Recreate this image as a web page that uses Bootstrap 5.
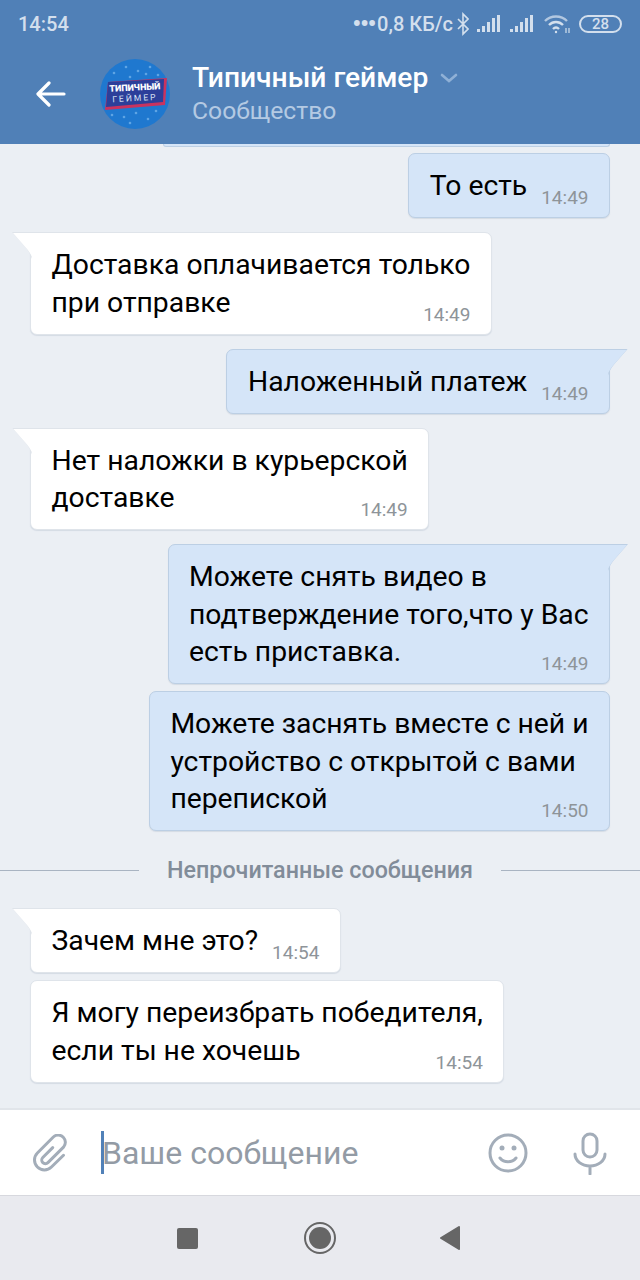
<!DOCTYPE html>
<html lang="ru">
<head>
    <meta charset="UTF-8">
    <meta name="viewport" content="width=device-width, initial-scale=1.0">
    <title>Типичный геймер</title>
    <link href="https://cdn.jsdelivr.net/npm/bootstrap@5.3.0/dist/css/bootstrap.min.css" rel="stylesheet">
    <style>
        body { margin: 0; width: 640px; height: 1280px; overflow: hidden; font-family: Roboto, "Liberation Sans", sans-serif; background: #ebeff4; }
        .app-screen { height: 1280px; }

        /* шапка */
        .top-bar { height: 144px; background: #5080b7; flex: none; position: relative; z-index: 2; }
        .status-row { height: 46px; padding: 1px 18px 0 18px; color: #d3dfed; font-size: 20px; font-weight: 500; }
        .speed-dots { font-size: 26px; line-height: 20px; letter-spacing: -1.500px; margin-right: 2px; }
        .battery-box { width: 43px; height: 18px; border: 2px solid #d3dfed; border-radius: 9px; font-size: 15px; line-height: 14px; text-align: center; }
        .head-row { height: 98px; padding: 0 0 2px 36px; }
        .back-btn { width: 30px; margin-right: 34px; }
        .group-pic { width: 70px; height: 70px; margin-right: 22px; flex: none; }
        .group-name { font-size: 28.2px; font-weight: 500; line-height: 34px; color: #fff; }
        .name-arrow { margin-left: 12px; }
        .group-type { font-size: 24.7px; line-height: 32px; color: #b4cae3; }

        /* сообщения */
        .chat-area { flex: 1 1 auto; overflow: hidden; padding: 0 30px; }
        .prev-sliver { height: 3px; margin-left: 133px; background: #d5e5f8; border: 1px solid #bccfe4; border-top: 0; border-radius: 0 0 5px 5px; }
        .bubble { position: relative; display: flow-root; width: fit-content; padding: 13px 20.5px 12.5px 20.5px; font-size: 28.3px; line-height: 37.5px; color: #000; border: 1px solid; border-radius: 7px; box-shadow: 0 1px 1px rgba(90, 110, 140, .15); white-space: nowrap; }
        .bubble-in { background: #fff; border-color: #dfe4ea; }
        .bubble-out { background: #d5e5f8; border-color: #bccfe4; align-self: flex-end; }
        .gap-new { margin-top: 14px; }
        .gap-same { margin-top: 7px; }
        .first-out { margin-top: 6px; }
        .msg-time { float: right; margin: 22px 0 -6px 14px; font-size: 19px; line-height: 18px; color: #8e9499; }
        .tail-in { border-top-left-radius: 0; }
        .tail-in::before, .tail-in::after { content: ""; position: absolute; top: -1px; width: 20px; height: 27px; clip-path: path('M0 0H20V27C19 23 17 20 14 16Z'); }
        .tail-in::before { left: -19px; background: #dfe4ea; }
        .tail-in::after { left: -18px; top: 0; background: #fff; }
        .tail-out { border-top-right-radius: 0; }
        .tail-out::before, .tail-out::after { content: ""; position: absolute; top: -1px; width: 20px; height: 27px; clip-path: path('M0 0H20L6 16C3 20 1 23 0 27Z'); }
        .tail-out::before { right: -19px; background: #bccfe4; }
        .tail-out::after { right: -18px; top: 0; background: #d5e5f8; }
        .unread-row { margin: 27px -30px 26px; height: 24px; font-size: 23.3px; font-weight: 500; color: #818c99; gap: 28px; }
        .unread-line { flex: 1 1 0; height: 1px; background: #a9b4c2; }

        /* поле ввода */
        .composer { height: 88px; flex: none; background: #fff; border-top: 2px solid #e1e5ea; border-bottom: 1px solid #d7d8de; padding: 0 33px 0 32px; }
        .text-caret { width: 3px; height: 43px; background: #5181b8; margin-left: 33px; }
        .hint-text { font-size: 32px; line-height: 40px; color: #939ba5; margin: 1px 0 0 -2px; }
        .emoji-icon { margin-right: 45px; }

        /* системная панель */
        .sys-nav { height: 84px; flex: none; background: #e9eaef; padding-right: 2px; }
        .sys-nav svg { display: block; }
        .home-key { margin: 0 103px 0 106px; }
    </style>
</head>
<body>
    <div class="app-screen d-flex flex-column">
        <!-- Шапка со статус-баром -->
        <div class="top-bar">
            <div class="status-row d-flex align-items-center">
                <span>14:54</span>
                <span class="ms-auto speed-dots">•••</span>
                <span>0,8 КБ/с</span>
                <svg class="ms-1" width="12" height="24" viewBox="0 0 12 24" fill="none" stroke="#d3dfed" stroke-width="1.6"><path d="M1 7l10 10-5 5V2l5 5L1 17"/></svg>
                <svg class="ms-2" width="25" height="18" viewBox="0 0 25 18" fill="#d3dfed"><rect x="0" y="14" width="3" height="3"/><rect x="5" y="11" width="3" height="6"/><rect x="10" y="7" width="3" height="10"/><rect x="15" y="3" width="3" height="14"/><rect x="20" y="0" width="3" height="17"/></svg>
                <svg class="ms-2" width="25" height="18" viewBox="0 0 25 18" fill="#d3dfed"><rect x="0" y="14" width="3" height="3"/><rect x="5" y="11" width="3" height="6"/><rect x="10" y="7" width="3" height="10"/><rect x="15" y="3" width="3" height="14"/><rect x="20" y="0" width="3" height="17"/></svg>
                <svg class="ms-2" width="28" height="20" viewBox="0 0 28 20" fill="none" stroke="#d3dfed" stroke-width="2.4"><path d="M2 7c6-6 16-6 22 0" opacity=".75"/><path d="M6 11c4-4 10-4 14 0"/><path d="M10 15c2-2 4-2 6 0"/><circle cx="13" cy="18" r="1.2" fill="#d3dfed" stroke="none"/><path d="M23 14v5M26 14v5" stroke-width="1.2"/></svg>
                <div class="battery-box ms-2">28</div>
            </div>
            <div class="head-row d-flex align-items-center">
                <div class="back-btn">
                    <svg class="d-block" width="30" height="26" viewBox="0 0 30 26" fill="none" stroke="#fff" stroke-width="3.2" stroke-linecap="round" stroke-linejoin="round"><path d="M28 13H3M13 2L2 13l11 11"/></svg>
                </div>
                <svg class="group-pic" viewBox="0 0 70 70">
                    <circle cx="35" cy="35" r="35" fill="#1f78cf"/>
                    <g fill="#5ea4e4">
                        <circle cx="14" cy="14" r="1.3"/><circle cx="26" cy="8" r="1.3"/><circle cx="38" cy="12" r="1.3"/><circle cx="50" cy="8" r="1.3"/><circle cx="58" cy="16" r="1.3"/><circle cx="30" cy="18" r="1.3"/><circle cx="46" cy="15" r="1.3"/>
                        <circle cx="12" cy="56" r="1.3"/><circle cx="24" cy="58" r="1.3"/><circle cx="36" cy="54" r="1.3"/><circle cx="48" cy="60" r="1.3"/><circle cx="56" cy="52" r="1.3"/><circle cx="30" cy="64" r="1.3"/>
                    </g>
                    <path d="M8 23L67 19l-2 27L5 51z" fill="#c9335f"/>
                    <path d="M8 23L64 20l-1 23L6 48z" fill="#2c3f9a"/>
                    <text x="35" y="31.500" font-family="Roboto" font-weight="900" font-size="9" fill="#fff" text-anchor="middle" transform="rotate(-3 35 31)">ТИПИЧНЫЙ</text>
                    <text x="35" y="42" font-family="Roboto" font-size="8.500" letter-spacing="2" fill="#dbe5f5" text-anchor="middle" transform="rotate(-3 35 42)">ГЕЙМЕР</text>
                </svg>
                <div>
                    <div class="group-name d-flex align-items-center">Типичный геймер
                        <svg class="name-arrow" width="18" height="10" viewBox="0 0 18 10" fill="none" stroke="#8fb0d6" stroke-width="2.6" stroke-linecap="round"><path d="M2 2l7 6 7-6"/></svg>
                    </div>
                    <div class="group-type">Сообщество</div>
                </div>
            </div>
        </div>

        <!-- Лента сообщений -->
        <div class="chat-area d-flex flex-column">
            <div class="prev-sliver"></div>
            <div class="bubble bubble-out first-out">То есть<span class="msg-time">14:49</span></div>
            <div class="bubble bubble-in tail-in gap-new">Доставка оплачивается только<br>при отправке<span class="msg-time">14:49</span></div>
            <div class="bubble bubble-out tail-out gap-new">Наложенный платеж<span class="msg-time">14:49</span></div>
            <div class="bubble bubble-in tail-in gap-new">Нет наложки в курьерской<br>доставке<span class="msg-time">14:49</span></div>
            <div class="bubble bubble-out tail-out gap-new">Можете снять видео в<br>подтверждение того,что у Вас<br>есть приставка.<span class="msg-time">14:49</span></div>
            <div class="bubble bubble-out gap-same">Можете заснять вместе с ней и<br>устройство с открытой с вами<br>перепиской<span class="msg-time">14:50</span></div>
            <div class="unread-row d-flex align-items-center">
                <div class="unread-line"></div>
                <span>Непрочитанные сообщения</span>
                <div class="unread-line"></div>
            </div>
            <div class="bubble bubble-in tail-in">Зачем мне это?<span class="msg-time">14:54</span></div>
            <div class="bubble bubble-in gap-same">Я могу переизбрать победителя,<br>если ты не хочешь<span class="msg-time">14:54</span></div>
        </div>

        <!-- Поле ввода -->
        <div class="composer d-flex align-items-center">
            <svg width="36" height="38" viewBox="10 11 40 42" fill="none" stroke="#a3adb9" stroke-width="3.300" stroke-linecap="round" stroke-linejoin="round"><path d="M33 26L22 37a4 4 0 0 0 5.700 5.700L45 25.500a8 8 0 0 0-11.300-11.300L16 32a11 11 0 0 0 15.600 15.600L45 34.500"/></svg>
            <div class="text-caret"></div>
            <div class="hint-text">Ваше сообщение</div>
            <svg class="ms-auto emoji-icon" width="40" height="40" viewBox="0 0 40 40" fill="none" stroke="#a3adb9" stroke-width="3" stroke-linecap="round"><circle cx="20" cy="20" r="18"/><path d="M12 25c4 5 12 5 16 0"/><circle cx="14" cy="15" r="2.500" fill="#a3adb9" stroke="none"/><circle cx="26" cy="15" r="2.500" fill="#a3adb9" stroke="none"/></svg>
            <svg width="34" height="44" viewBox="0 0 34 44" fill="none" stroke="#a3adb9" stroke-width="3" stroke-linecap="round"><rect x="10" y="3" width="14" height="23" rx="7"/><path d="M2 23c0 7 7 12 15 12s15-5 15-12M17 35v8"/></svg>
        </div>

        <!-- Системная навигация -->
        <div class="sys-nav d-flex align-items-center justify-content-center">
            <svg width="21" height="21" viewBox="0 0 21 21"><rect width="21" height="21" rx="2" fill="#666"/></svg>
            <svg class="home-key" width="32" height="32" viewBox="-16 -16 32 32" fill="#666"><circle r="15" fill="none" stroke="#666" stroke-width="2"/><circle r="11"/></svg>
            <svg width="22" height="26" viewBox="0 0 22 26"><path d="M20 2L2 13l18 11z" fill="#666" stroke="#666" stroke-width="2" stroke-linejoin="round"/></svg>
        </div>
    </div>
    <script src="https://cdn.jsdelivr.net/npm/bootstrap@5.3.0/dist/js/bootstrap.bundle.min.js"></script>
</body>
</html>
